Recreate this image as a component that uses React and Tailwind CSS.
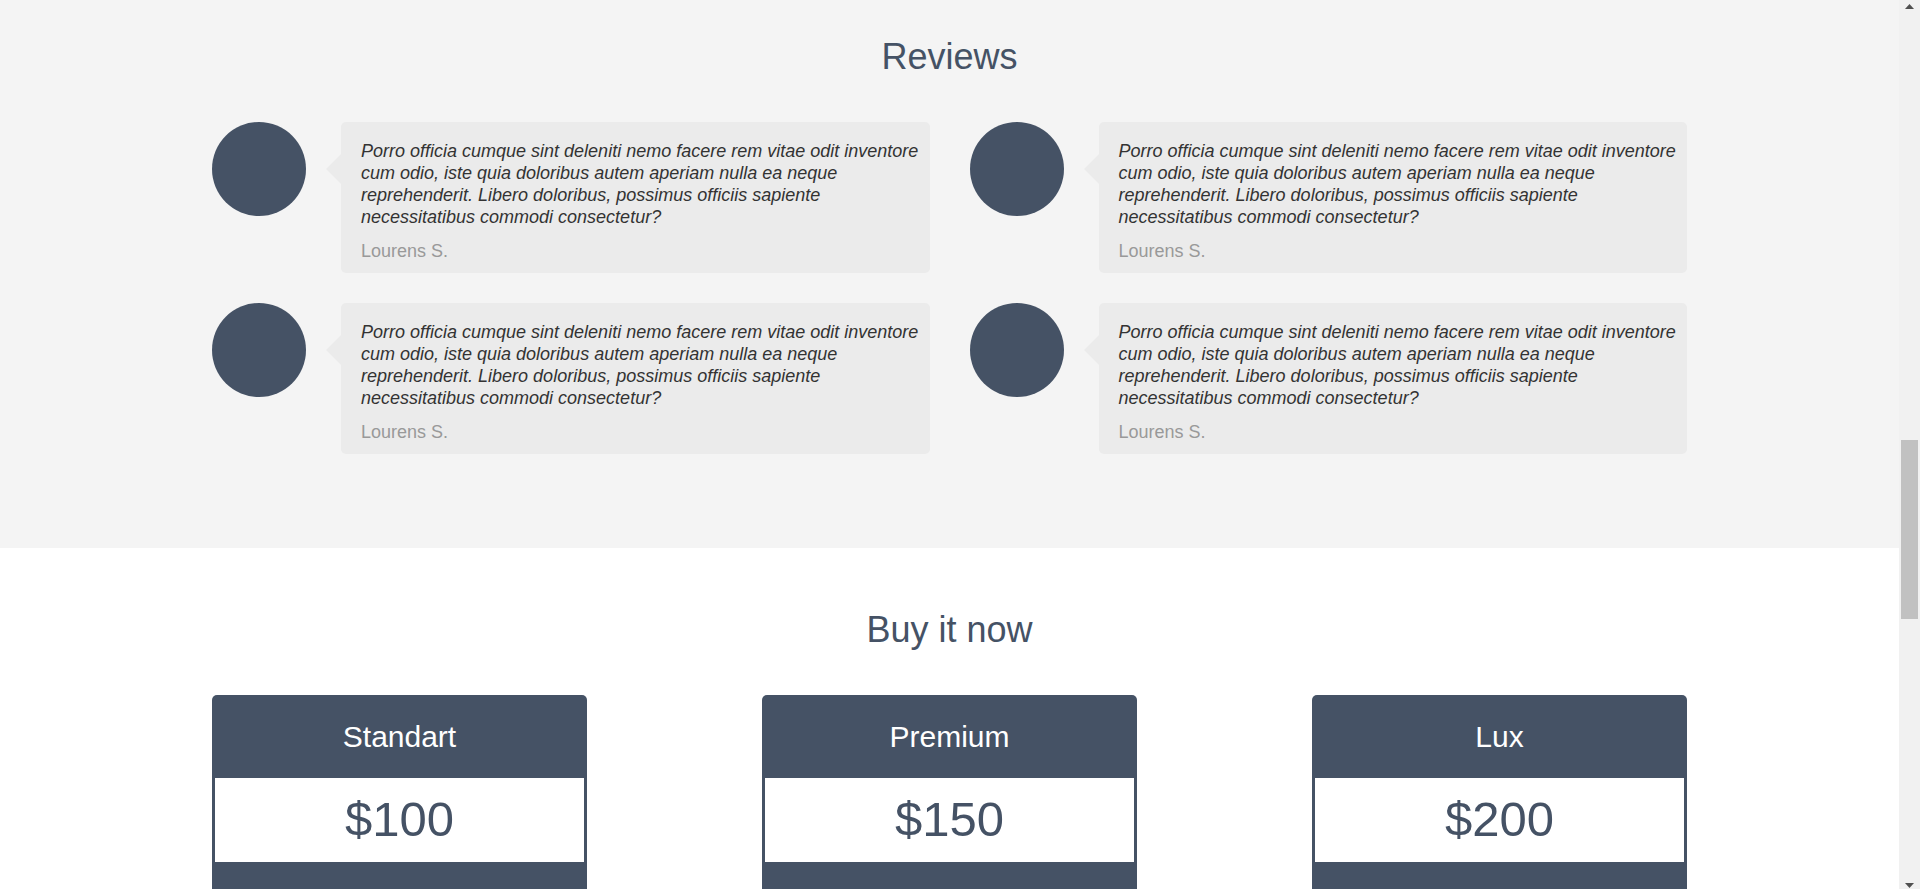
import React from 'react';

const quote =
  'Porro officia cumque sint deleniti nemo facere rem vitae odit inventore cum odio, iste quia doloribus autem aperiam nulla ea neque reprehenderit. Libero doloribus, possimus officiis sapiente necessitatibus commodi consectetur?';

const reviews = [1, 2, 3, 4];

const plans = [
  { name: 'Standart', price: '$100' },
  { name: 'Premium', price: '$150' },
  { name: 'Lux', price: '$200' },
];

const Review = () => (
  <div className="flex items-start">
    <div className="w-[94px] h-[94px] rounded-full bg-[#455265] shrink-0"></div>
    <div className="relative ml-[35px] flex-1 bg-[#ebebeb] rounded-[5px] pl-5 pr-[8px] pt-[18px] pb-[10px]">
      {/* bubble arrow */}
      <div className="absolute -left-[15px] top-[32px] w-0 h-0 border-y-[15px] border-y-transparent border-r-[15px] border-r-[#ebebeb]"></div>
      <p className="text-[18px] leading-[22px] italic text-[#333]">{quote}</p>
      <div className="mt-[11px] text-[18px] leading-[24px] text-[#999]">Lourens S.</div>
    </div>
  </div>
);

const Scrollbar = () => (
  <div className="w-[21px] h-full bg-[#f1f1f1] flex flex-col items-center shrink-0">
    <svg className="mt-[4px]" width="9" height="5" viewBox="0 0 9 5">
      <path d="M0 5 L4.5 0 L9 5 Z" fill="#505050" />
    </svg>
    <div className="mt-[431px] w-[17px] h-[179px] bg-[#c1c1c1]"></div>
    <svg className="mt-auto mb-[1px]" width="9" height="5" viewBox="0 0 9 5">
      <path d="M0 0 L9 0 L4.5 5 Z" fill="#505050" />
    </svg>
  </div>
);

export default function App() {
  return (
    <div className="flex h-[889px] w-full overflow-hidden bg-white font-['Liberation_Sans',Arial,sans-serif]">
      <div className="flex-1 flex flex-col">
        {/* Reviews */}
        <section className="bg-[#f4f4f4] pt-[37px] pb-[94px]">
          <h2 className="text-center text-4xl leading-10 text-[#455265] mb-[45px]">Reviews</h2>
          <div className="w-[1475px] mx-auto grid grid-cols-2 gap-x-10 gap-y-[30px]">
            {reviews.map((r) => (
              <Review key={r} />
            ))}
          </div>
        </section>

        {/* Pricing */}
        <section className="bg-white pt-[62px]">
          <h2 className="text-center text-4xl leading-10 text-[#455265] mb-[45px]">Buy it now</h2>
          <div className="w-[1475px] mx-auto flex justify-between">
            {plans.map((p) => (
              <div key={p.name} className="w-[375px] rounded-t-[5px] bg-[#455265] overflow-hidden">
                <div className="h-[83px] flex items-center justify-center text-[30px] text-white">{p.name}</div>
                <div className="mx-[3px] h-[84px] bg-white flex items-center justify-center text-[49px] text-[#455265]">
                  {p.price}
                </div>
                <div className="h-[80px]"></div>
              </div>
            ))}
          </div>
        </section>
      </div>
      <Scrollbar />
    </div>
  );
}
